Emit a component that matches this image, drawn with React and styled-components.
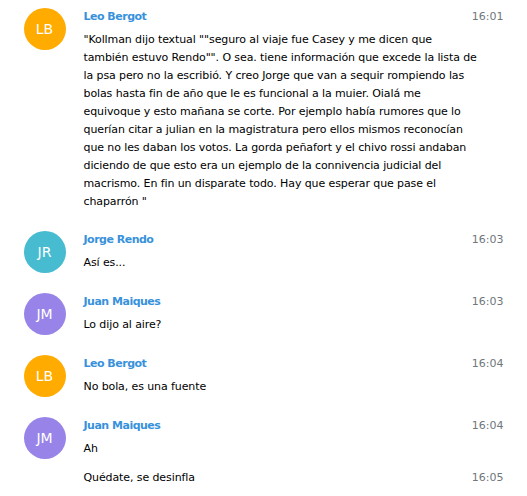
import React from "react";
import styled, { createGlobalStyle } from "styled-components";

const Global = createGlobalStyle`
  html, body { margin: 0; padding: 0; background: #fff; }
  body {
    font: 11px/18px "DejaVu Sans", Verdana, sans-serif;
    color: #000;
    overflow: hidden;
  }
`;

const PageBody = styled.div`
  width: 480px;
  margin: -2px auto 0;
`;

const Message = styled.div`
  padding: 10px 0;
  margin-top: ${(p) => (p.$joined ? "-10px" : "0")};
  &::after { content: ""; display: block; clear: both; }
`;

const Userpic = styled.div`
  float: left;
  width: 42px;
  height: 42px;
  border-radius: 50%;
  background: ${(p) => p.$color};
  color: #fff;
  text-align: center;
  line-height: 42px;
  font-size: 14px;
`;

const Body = styled.div`
  margin-left: 60px;
`;

const Date = styled.div`
  float: right;
  color: #70777b;
`;

const FromName = styled.div`
  color: #3892db;
  font-weight: bold;
  letter-spacing: -0.5px;
  padding-bottom: 5px;
`;

const Text = styled.div`
  line-height: 18px;
  letter-spacing: -0.1px;
  white-space: nowrap;
`;

const COLORS = { LB: "#ffab00", JR: "#47bcd1", JM: "#9884e8" };

const messages = [
  {
    init: "LB",
    name: "Leo Bergot",
    time: "16:01",
    lines: [
      "\"Kollman dijo textual \"\"seguro al viaje fue Casey y me dicen que",
      "también estuvo Rendo\"\". O sea. tiene información que excede la lista de",
      "la psa pero no la escribió. Y creo Jorge que van a sequir rompiendo las",
      "bolas hasta fin de año que le es funcional a la muier. Oialá me",
      "equivoque y esto mañana se corte. Por ejemplo había rumores que lo",
      "querían citar a julian en la magistratura pero ellos mismos reconocían",
      "que no les daban los votos. La gorda peñafort y el chivo rossi andaban",
      "diciendo de que esto era un ejemplo de la connivencia judicial del",
      "macrismo. En fin un disparate todo. Hay que esperar que pase el",
      "chaparrón \"",
    ],
  },
  { init: "JR", name: "Jorge Rendo", time: "16:03", lines: ["Así es..."] },
  { init: "JM", name: "Juan Maiques", time: "16:03", lines: ["Lo dijo al aire?"] },
  { init: "LB", name: "Leo Bergot", time: "16:04", lines: ["No bola, es una fuente"] },
  { init: "JM", name: "Juan Maiques", time: "16:04", lines: ["Ah"] },
  { joined: true, time: "16:05", lines: ["Quédate, se desinfla"] },
];

export default function App() {
  return (
    <>
      <Global />
      <PageBody>
        {messages.map((m, i) => (
          <Message key={i} $joined={m.joined}>
            {!m.joined && <Userpic $color={COLORS[m.init]}>{m.init}</Userpic>}
            <Body>
              <Date>{m.time}</Date>
              {!m.joined && <FromName>{m.name}</FromName>}
              <Text>
                {m.lines.map((l, j) => (
                  <React.Fragment key={j}>
                    {l}
                    {j < m.lines.length - 1 && <br />}
                  </React.Fragment>
                ))}
              </Text>
            </Body>
          </Message>
        ))}
      </PageBody>
    </>
  );
}
